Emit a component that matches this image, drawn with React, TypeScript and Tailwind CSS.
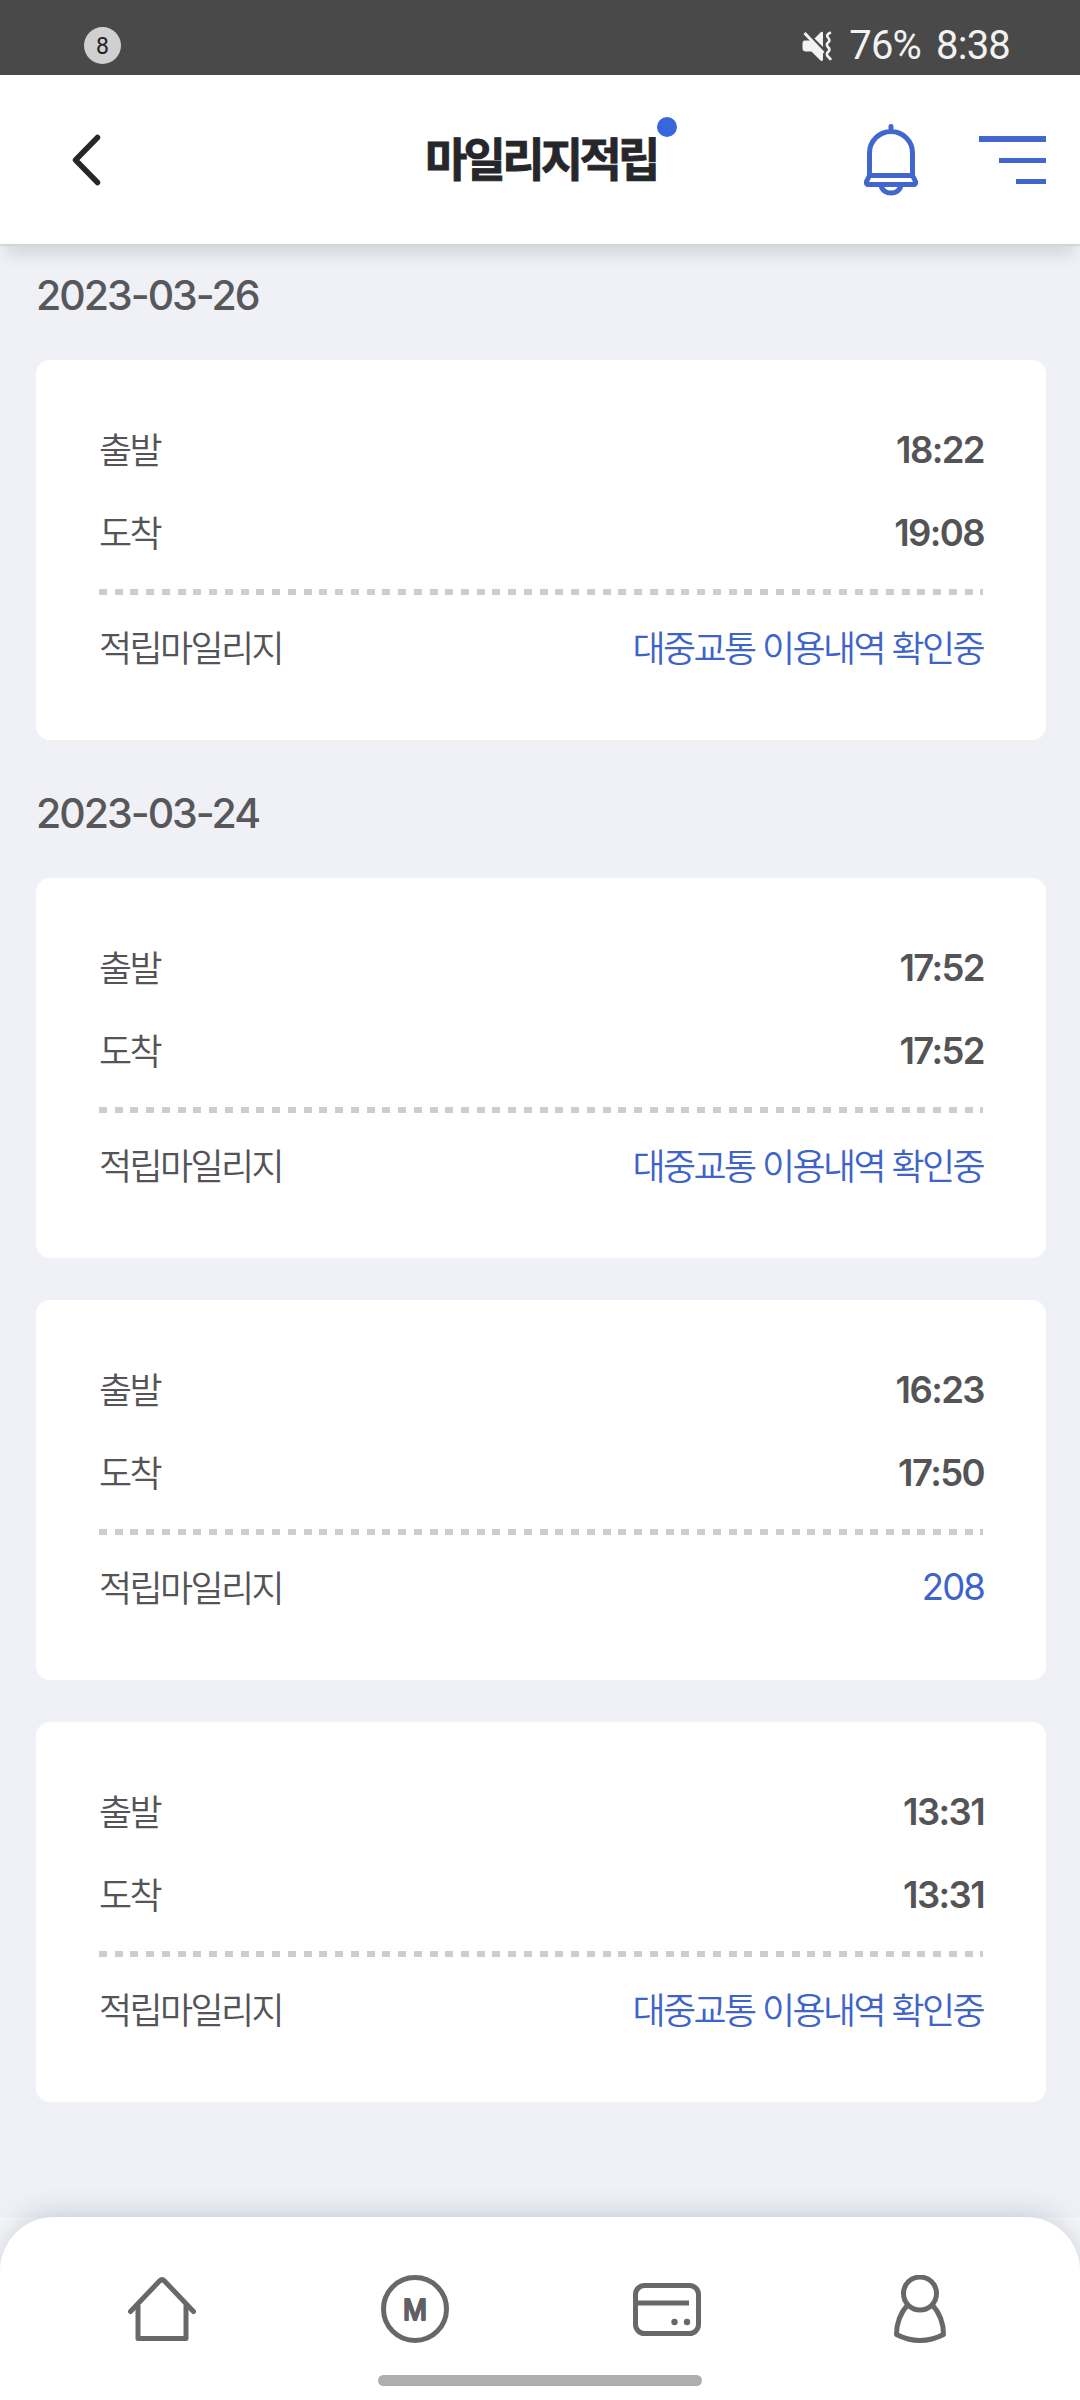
type Trip = {
  departure: string;
  arrival: string;
  mileage?: number;
};

type TripGroup = {
  date: string;
  trips: Trip[];
};

const groups: TripGroup[] = [
  {
    date: '2023-03-26',
    trips: [{ departure: '18:22', arrival: '19:08' }],
  },
  {
    date: '2023-03-24',
    trips: [
      { departure: '17:52', arrival: '17:52' },
      { departure: '16:23', arrival: '17:50', mileage: 208 },
      { departure: '13:31', arrival: '13:31' },
    ],
  },
];

function StatusBar() {
  return (
    <div className="flex h-[75px] shrink-0 items-center justify-between bg-[#494949] pt-4 pr-[70px] pl-[84px] font-['Roboto',sans-serif]">
      <span className="flex size-[37px] items-center justify-center rounded-full bg-[#d0d0d0] pt-[3px] text-[23px] text-[#222]">
        8
      </span>
      <div className="flex items-center text-[40px] leading-none text-[#f2f2f2]">
        <svg width="30" height="30" viewBox="0 0 30 30" className="mr-[17px]">
          <path
            d="M2.500 9.500h6L21 22v6q0 3-2.500 1.500L9.500 20.500H4q-3.500 0-3.500-3.500v-4q0-3.500 2-3.500z"
            fill="#f2f2f2"
          />
          <path d="M12.500 7.500L19 1q2-1 2 1v14z" fill="#f2f2f2" />
          <path d="M2.500 2l19 20" stroke="#f2f2f2" strokeWidth="3" />
          <path
            d="M29 1.500q-5.500 2-3 5t.5 4.500q-3 2.500-.5 5t.5 4.500q-3 2.500-.5 5t3 3.500"
            fill="none"
            stroke="#f2f2f2"
            strokeWidth="2.600"
          />
        </svg>
        <span className="mr-[15px] tracking-[-0.8px]">76%</span>
        <span className="tracking-[-0.8px]">8:38</span>
      </div>
    </div>
  );
}

function Header() {
  return (
    <header className="relative z-10 grid h-[171px] shrink-0 grid-cols-[353px_auto_1fr] items-center border-b-2 border-[#d3d7d8] bg-white pr-[34px] pl-[72px] shadow-[0_14px_16px_-6px_rgba(0,0,0,0.12)]">
      <button type="button" aria-label="back" className="w-min">
        <svg width="30" height="52" viewBox="0 0 30 52">
          <path
            d="M25.500 3.500L3.500 26l22 22.500"
            fill="none"
            stroke="#26272b"
            strokeWidth="5.500"
            strokeLinecap="round"
            strokeLinejoin="round"
          />
        </svg>
      </button>
      <div className="relative pb-[7px]">
        <h1 className="text-[46px] leading-none font-bold tracking-[-3.700px] whitespace-nowrap text-[#26272b] [-webkit-text-stroke:0.8px_#26272b]">
          마일리지적립
        </h1>
        <span className="absolute top-[-16px] right-[-20px] size-5 rounded-full bg-[#3a66dd]" />
      </div>
      <div className="flex items-center justify-end gap-[61px] text-[#4167cf]">
        <svg
          width="54"
          height="72"
          viewBox="0 0 54 72"
          fill="none"
          stroke="currentColor"
          strokeWidth="5"
          strokeLinecap="round"
          strokeLinejoin="round">
          <path d="M27 2.500v5M5.500 50V29a21.500 21.500 0 0 1 43 0v21" />
          <path d="M5.500 51.500h43l3 6q.5 3-2 3h-45q-2.500 0-2-3z" />
          <path d="M17 61.500C19 71.500 35 71.500 37 61.500" />
        </svg>
        <svg width="67" height="48" viewBox="0 0 67 48" fill="currentColor">
          <path d="M0 0h67v6H0zM20 22h47v5H20zM37 43h30v5H37z" />
        </svg>
      </div>
    </header>
  );
}

function Row({ label, value }: { label: string; value: string }) {
  return (
    <div className="flex h-[83px] items-center justify-between">
      <span className="pb-[6px] text-[36px] font-[350] tracking-[-2.600px]">
        {label}
      </span>
      <span className="mr-[-1px] font-['Inter',sans-serif] text-[36.500px] font-semibold tracking-[-1.600px]">
        {value}
      </span>
    </div>
  );
}

function TripCard({ trip }: { trip: Trip }) {
  return (
    <div className="flex h-[380px] flex-col rounded-[14px] bg-white px-[63px] pt-[49px] leading-none text-[#545457]">
      <Row label="출발" value={trip.departure} />
      <Row label="도착" value={trip.arrival} />
      <div className="mt-[14px] h-[6px] bg-[repeating-linear-gradient(90deg,#cdcdcd_0_8px,transparent_8px_15.74px)]" />
      <div className="mt-[12px] flex h-[83px] items-center justify-between">
        <span className="pb-[6px] text-[36px] font-[350] tracking-[-2.600px]">
          적립마일리지
        </span>
        {trip.mileage ? (
          <span className="mr-[-1px] pb-[2px] font-['Inter',sans-serif] text-[36.500px] tracking-[-1.900px] text-[#3e63c9]">
            {trip.mileage}
          </span>
        ) : (
          <span className="pb-[6px] text-[36px] font-[350] tracking-[-2.600px] text-[#3e63c9] [word-spacing:2px]">
            대중교통 이용내역 확인중
          </span>
        )}
      </div>
    </div>
  );
}

function BottomNav() {
  return (
    <div className="relative z-10 h-[183px] shrink-0 bg-[#f6f7f9]">
      <nav className="flex h-full flex-col rounded-t-[54px] bg-white pt-[58px] text-[#68686b] shadow-[0_-4px_30px_-4px_rgba(60,75,110,0.28)]">
        <div className="flex justify-between pr-[126px] pl-[128px]">
          <svg
            width="68"
            height="68"
            viewBox="0 0 68 68"
            fill="none"
            stroke="currentColor"
            strokeWidth="5"
            strokeLinecap="round"
            strokeLinejoin="round">
            <path d="M2.500 36.500L31.500 6q2.500-2.500 5 0l29 30.500" />
            <path d="M10 31v32.500h48V31" />
          </svg>
          <svg width="68" height="68" viewBox="0 0 68 68" fill="none">
            <circle
              cx="34"
              cy="34"
              r="31.500"
              stroke="currentColor"
              strokeWidth="5"
            />
            <text
              x="22"
              y="44.500"
              textLength="24"
              lengthAdjust="spacingAndGlyphs"
              className="fill-[#5f6066] font-['Inter',sans-serif] text-[29px] font-medium"
              stroke="#5f6066"
              strokeWidth="1.800"
              strokeLinejoin="round">
              M
            </text>
          </svg>
          <svg
            width="68"
            height="68"
            viewBox="0 0 68 68"
            fill="none"
            stroke="currentColor"
            strokeWidth="5">
            <rect x="2.500" y="10.500" width="63" height="48" rx="9" />
            <path d="M4 28h52" />
            <circle cx="41.500" cy="47" r="3.200" fill="currentColor" stroke="none" />
            <circle cx="54" cy="47" r="3.200" fill="currentColor" stroke="none" />
          </svg>
          <svg
            width="68"
            height="68"
            viewBox="0 0 68 68"
            fill="none"
            stroke="currentColor"
            strokeWidth="5"
            strokeLinejoin="round">
            <ellipse cx="34" cy="18.500" rx="16.500" ry="16.500" />
            <path d="M22 29.500Q10.500 42 10.500 59.500 22 65.500 34 65.500T57.500 59.500Q57.500 42 46 29.500" />
          </svg>
        </div>
        <div className="mt-[32px] h-[11px] w-[324px] self-center rounded-full bg-[#aeaeae]" />
      </nav>
    </div>
  );
}

export default function App() {
  return (
    <div className="flex h-[2400px] w-[1080px] flex-col overflow-hidden bg-[#eff1f6] font-['Noto_Sans_CJK_KR',sans-serif]">
      <StatusBar />
      <Header />
      <main className="flex-1 pr-[34px] pl-9">
        {groups.map((group) => (
          <section key={group.date} className="pb-[24px]">
            <h2 className="flex h-[114px] items-center pb-[14px] font-['Inter',sans-serif] text-[41px] font-medium tracking-[-2px] text-[#58585b]">
              {group.date}
            </h2>
            <div className="flex flex-col gap-[42px]">
              {group.trips.map((trip, index) => (
                <TripCard key={index} trip={trip} />
              ))}
            </div>
          </section>
        ))}
      </main>
      <BottomNav />
    </div>
  );
}
